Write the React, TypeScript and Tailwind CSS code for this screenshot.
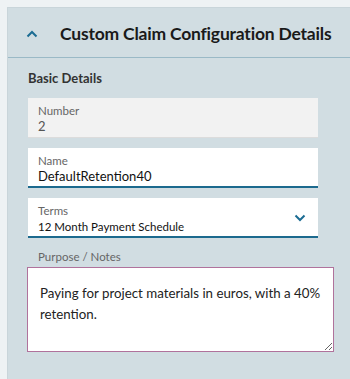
import React from "react";

export default function App() {
  const font = { fontFamily: "Lato, 'Noto Sans', sans-serif" };
  return (
    <div className="w-[350px] h-[379px] bg-[#eef2f4] pt-[7px] pl-[7px] overflow-hidden" style={font}>
      <div className="w-[343px] h-[372px] bg-[#d1dde2] border-l border-t border-[#c9d5da]">
        <div className="h-[50px] flex items-center border-b border-[#9ab9c6] pt-[3px]">
          <svg width="12" height="8" viewBox="0 0 12 8" className="ml-[18px] mr-[22px]">
            <path d="M1.5 6.5 L6 2 L10.5 6.5" fill="none" stroke="#1b6c93" strokeWidth="2" />
          </svg>
          <span className="text-[17.5px] font-bold tracking-[-0.2px] text-[#1a1a1a] whitespace-nowrap">Custom Claim Configuration Details</span>
        </div>
        <div className="pl-[20px] pt-[11px]">
          <div className="text-[13px] font-bold text-[#333] h-[28px]">Basic Details</div>
          <div className="w-[290px] h-[40px] bg-[#f2f2f2] border-b border-[#dcdcdc] px-[10px] pt-[5px] mt-[1px]">
            <div className="text-[11.5px] leading-[15px] text-[#666]">Number</div>
            <div className="text-[13px] leading-[17px] text-[#555]">2</div>
          </div>
          <div className="w-[290px] h-[40px] bg-white border-b-2 border-[#1c6a8e] px-[10px] pt-[5px] mt-[10px]">
            <div className="text-[11.5px] leading-[15px] text-[#666]">Name</div>
            <div className="text-[13px] leading-[17px] text-[#111]">DefaultRetention40</div>
          </div>
          <div className="w-[290px] h-[40px] bg-white border-b-2 border-[#1c6a8e] pl-[10px] pr-[12px] pt-[5px] mt-[10px] flex items-center justify-between">
            <div className="self-start">
              <div className="text-[11.5px] leading-[15px] text-[#666]">Terms</div>
              <div className="text-[11.5px] leading-[17px] text-[#111]">12 Month Payment Schedule</div>
            </div>
            <svg width="12" height="8" viewBox="0 0 12 8" className="mt-[-3px]">
              <path d="M1.5 1.5 L6 6 L10.5 1.5" fill="none" stroke="#1b6c93" strokeWidth="2" />
            </svg>
          </div>
          <div className="text-[11.5px] leading-[15px] text-[#666] pl-[10px] mt-[11px]">Purpose / Notes</div>
          <textarea
            readOnly
            className="block w-[307px] h-[85px] bg-white border border-[#b0729c] mt-[3px] ml-[-1px] px-[12px] pt-[15px] text-[13.3px] leading-[21px] text-[#222] outline-none"
            style={font}
            defaultValue="Paying for project materials in euros, with a 40% retention."
          />
        </div>
      </div>
    </div>
  );
}
